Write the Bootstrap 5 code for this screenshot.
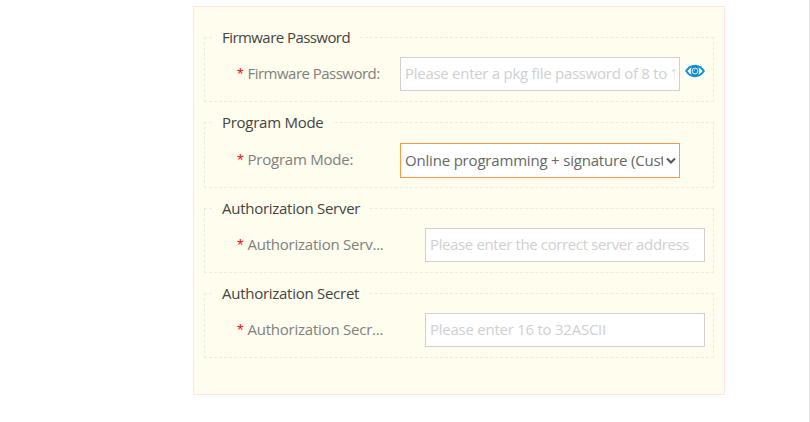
<!DOCTYPE html>
<html lang="en">
<head>
<meta charset="utf-8">
<title>Firmware settings</title>
<link href="https://cdn.jsdelivr.net/npm/bootstrap@5.3.0/dist/css/bootstrap.min.css" rel="stylesheet">
<style>
body{font-family:"Open Sans","Noto Sans",sans-serif;font-size:15px;line-height:21px;color:#555}
.page{height:422px;padding-top:6px;padding-left:193px;border-right:1px solid #e6e6e6}
.panel{width:532px;height:389px;padding:20px 10px 0;background:#fffdee;border:1px solid #ffe4e1}
.group{border:1px dashed #ebebeb;margin-bottom:10px;padding:0 8px 10px 7px}
.group legend{float:none;width:auto;height:21px;line-height:21px;font-size:15px;margin:0;padding:0 10px;color:#444;letter-spacing:-.27px}
.line{padding-top:9px;padding-left:25px}
.caption{width:163px;height:22px;color:#808080;letter-spacing:-.23px}
.caption.wide{width:188px}
.star{color:#f11;width:10.5px;font-family:"Liberation Sans",sans-serif;font-size:17px;line-height:23px}
.field{width:280px;height:34px;padding:0 4px 2px;border:1px solid #d0d0d0;border-radius:0;font-size:15px;line-height:21px;letter-spacing:-.25px;color:#666}
.field::placeholder{color:#d0d0d0}
.group .snug-legend{letter-spacing:-.56px}
.snug-caption{letter-spacing:-.52px}
#pw{letter-spacing:-.28px}
#srv{letter-spacing:-.38px}
.pick-group{padding-bottom:9px}
.pick-line{padding-top:10px}
.pick-line .caption{height:23px}
.picker{height:35px;border-color:#f79a43;padding:0 3px 0 4px;background:#fff;letter-spacing:-.19px}
.pick-text{width:258px}
.eye{margin-bottom:6px}
</style>
<script src="https://cdn.jsdelivr.net/npm/bootstrap@5.3.0/dist/js/bootstrap.bundle.min.js"></script>
</head>
<body class="bg-white overflow-hidden">
<main class="page">
<form class="panel">
  <fieldset class="group">
    <legend class="snug-legend">Firmware Password</legend>
    <div class="line d-flex align-items-center">
      <label class="caption snug-caption d-flex flex-shrink-0 text-nowrap" for="pw"><span class="star">*</span><span>Firmware Password:</span></label>
      <input id="pw" class="field flex-shrink-0" type="text" placeholder="Please enter a pkg file password of 8 to 16 characters">
      <svg class="eye flex-shrink-0 ms-1" width="22" height="18" viewBox="0 0 22 18"><path fill="#fff" d="M0 3h22v12H0z" opacity=".7"/><path fill="#118ed2" d="M1 9Q5 2.800 11 2.800T21 9Q17 15.200 11 15.200T1 9z"/><path fill="#fff" d="M3.400 9Q5 6.600 7.600 5.200Q5.800 9 7.600 12.800Q5 11.400 3.400 9zM18.600 9Q17 6.600 14.400 5.200Q16.200 9 14.400 12.800Q17 11.400 18.600 9z"/><circle cx="11" cy="9" r="2.900" fill="none" stroke="#d8effa" stroke-width="1"/><path fill="none" stroke="#d8effa" stroke-width=".8" d="M10 9Q10 7.800 11.200 7.800"/></svg>
    </div>
  </fieldset>
  <fieldset class="group pick-group">
    <legend>Program Mode</legend>
    <div class="line d-flex align-items-center pick-line">
      <span class="caption d-flex flex-shrink-0 text-nowrap"><span class="star">*</span><span>Program Mode:</span></span>
      <div class="field picker d-flex align-items-center flex-shrink-0" role="combobox">
        <span class="pick-text overflow-hidden text-nowrap">Online programming + signature (Customer)</span>
        <svg class="flex-shrink-0 ms-auto" width="10" height="8" viewBox="0 0 10 8"><path d="M1 1.500l4 4 4-4" fill="none" stroke="#555" stroke-width="2"/></svg>
      </div>
    </div>
  </fieldset>
  <fieldset class="group">
    <legend>Authorization Server</legend>
    <div class="line d-flex align-items-center">
      <label class="caption wide d-flex flex-shrink-0 text-nowrap" for="srv"><span class="star">*</span><span>Authorization Serv...</span></label>
      <input id="srv" class="field flex-shrink-0" type="text" placeholder="Please enter the correct server address">
    </div>
  </fieldset>
  <fieldset class="group">
    <legend>Authorization Secret</legend>
    <div class="line d-flex align-items-center">
      <label class="caption wide d-flex flex-shrink-0 text-nowrap" for="sec"><span class="star">*</span><span>Authorization Secr...</span></label>
      <input id="sec" class="field flex-shrink-0" type="text" placeholder="Please enter 16 to 32ASCII">
    </div>
  </fieldset>
</form>
</main>
</body>
</html>
